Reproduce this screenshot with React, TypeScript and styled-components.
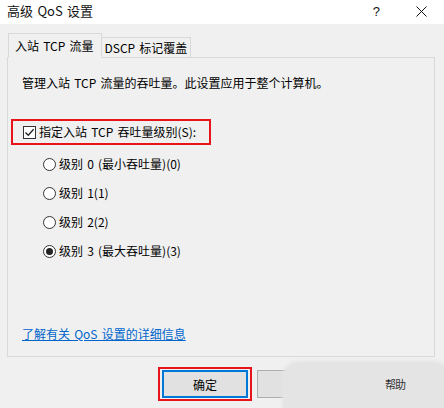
import styled, { createGlobalStyle } from 'styled-components'

const GlobalStyle = createGlobalStyle`
  html, body {
    margin: 0;
    padding: 0;
    background: #f0f0f0;
  }
  body {
    font-family: "Noto Sans CJK SC", "Noto Sans", sans-serif;
    font-size: 12px;
    word-spacing: 1.5px;
    color: #000;
  }
`

const levels = [
  { label: '级别 0 (最小吞吐量)(0)', checked: false },
  { label: '级别 1(1)', checked: false },
  { label: '级别 2(2)', checked: false },
  { label: '级别 3 (最大吞吐量)(3)', checked: true },
]

export default function App() {
  return (
    <>
      <GlobalStyle />
      <Dialog>
        <TitleBar>
          <Title>高级 QoS 设置</Title>
          <Controls>
            <HelpGlyph>?</HelpGlyph>
            <svg width="11" height="11" viewBox="0 0 11 11">
              <path d="M0.5 0.5 L10.5 10.5 M10.5 0.5 L0.5 10.5" stroke="#111" strokeWidth="1" />
            </svg>
          </Controls>
        </TitleBar>

        <Body>
          <TabList>
            <Tab $active>入站 TCP 流量</Tab>
            <Tab>DSCP 标记覆盖</Tab>
          </TabList>

          <Panel>
            <Description>管理入站 TCP 流量的吞吐量。此设置应用于整个计算机。</Description>

            <Highlight>
              <CheckRow>
                <CheckBox>
                  <svg width="11" height="11" viewBox="0 0 11 11">
                    <path d="M1.5 5.5 L4.3 8.3 L9.6 2.2" fill="none" stroke="#222" strokeWidth="1.3" />
                  </svg>
                </CheckBox>
                指定入站 TCP 吞吐量级别(S):
              </CheckRow>
            </Highlight>

            <RadioList>
              {levels.map((l) => (
                <RadioRow key={l.label}>
                  <Radio $checked={l.checked} />
                  {l.label}
                </RadioRow>
              ))}
            </RadioList>

            <Link>了解有关 QoS 设置的详细信息</Link>
          </Panel>

          <Footer>
            <ButtonFrame>
              <Button $default>确定</Button>
            </ButtonFrame>
            <Button>取消</Button>
            <Button>
              <ButtonLabel>帮助</ButtonLabel>
            </Button>
            <Smudge />
          </Footer>
        </Body>
      </Dialog>
    </>
  )
}

// ------------------ STYLING ------------------

const Dialog = styled.div`
  width: 444px;
  height: 408px;
  overflow: hidden;
  background: #f0f0f0;
  display: flex;
  flex-direction: column;
`

const TitleBar = styled.div`
  height: 24px;
  background: #fff;
  display: flex;
  align-items: center;
  justify-content: space-between;
  padding: 0 17px 0 7px;
  flex-shrink: 0;
`

const Title = styled.div`
  font-size: 13px;
  color: #111;
  line-height: 16px;
  margin-top: -2px;
`

const Controls = styled.div`
  display: flex;
  align-items: center;
  gap: 36px;
  margin-top: -2px;
`

const HelpGlyph = styled.span`
  font-family: "Liberation Sans", sans-serif;
  font-size: 13px;
  color: #111;
`

const Body = styled.div`
  position: relative;
  padding: 9px 9px 0 7px;
  display: flex;
  flex-direction: column;
`

const TabList = styled.div`
  display: flex;
  align-items: flex-end;
  height: 25px;
  padding-left: 1px;
  position: relative;
  z-index: 1;
  margin-bottom: -1px;
`

const Tab = styled.div<{ $active?: boolean }>`
  height: ${(p) => (p.$active ? '25px' : '21px')};
  box-sizing: border-box;
  padding: ${(p) => (p.$active ? '0 7px 0 6px' : '0 3px 0 3px')};
  border: 1px solid #d9d9d9;
  border-bottom: ${(p) => (p.$active ? '1px solid #f0f0f0' : '1px solid #d9d9d9')};
  border-left-width: ${(p) => (p.$active ? '1px' : '0')};
  background: #f0f0f0;
  display: flex;
  align-items: center;
  line-height: 16px;
  white-space: nowrap;
`

const Panel = styled.div`
  height: 300px;
  box-sizing: border-box;
  border: 1px solid #d9d9d9;
  background: #f0f0f0;
  padding: 17px 0 14px 14px;
  display: flex;
  flex-direction: column;
`

const Description = styled.div`
  line-height: 16px;
`

const Highlight = styled.div`
  margin: 28px 0 0 -11px;
  width: 200px;
  height: 26px;
  box-sizing: border-box;
  border: 2px solid #e8131b;
  display: flex;
  align-items: center;
  padding-left: 10px;
`

const CheckRow = styled.label`
  display: flex;
  align-items: center;
  gap: 3px;
  line-height: 16px;
`

const CheckBox = styled.span`
  width: 13px;
  height: 13px;
  box-sizing: border-box;
  border: 1px solid #333;
  background: #fff;
  display: flex;
  align-items: center;
  justify-content: center;
`

const RadioList = styled.div`
  display: flex;
  flex-direction: column;
  gap: 13px;
  margin: 11px 0 0 21px;
`

const RadioRow = styled.label`
  display: flex;
  align-items: center;
  gap: 3px;
  line-height: 16px;
`

const Radio = styled.span<{ $checked?: boolean }>`
  width: 13px;
  height: 13px;
  box-sizing: border-box;
  border-radius: 50%;
  border: 1px solid #333;
  background: #fff;
  display: flex;
  align-items: center;
  justify-content: center;

  &::after {
    content: '';
    width: 7px;
    height: 7px;
    border-radius: 50%;
    background: ${(p) => (p.$checked ? '#222' : 'transparent')};
  }
`

const Link = styled.a`
  margin-top: auto;
  color: #0066cc;
  text-decoration: underline;
  line-height: 16px;
  cursor: pointer;
`

const Footer = styled.div`
  position: relative;
  display: flex;
  align-items: center;
  gap: 9px;
  padding-left: 155px;
  margin-top: 13px;
`

const ButtonFrame = styled.div`
  margin: -3px -4px -3px -4px;
  padding: 1px 2px;
  border: 2px solid #e8131b;
  display: flex;
`

const Button = styled.div<{ $default?: boolean }>`
  width: 86px;
  height: 28px;
  box-sizing: border-box;
  border: ${(p) => (p.$default ? '2px solid #0078d7' : '1px solid #adadad')};
  background: #e1e1e1;
  display: flex;
  align-items: center;
  justify-content: center;
  flex-shrink: 0;
`

const ButtonLabel = styled.span`
  position: relative;
  z-index: 2;
  color: #333;
  font-size: 11px;
  letter-spacing: -1px;
`

const Smudge = styled.div`
  position: absolute;
  left: 275px;
  top: -9px;
  width: 168px;
  height: 60px;
  border-radius: 16px;
  background: #e4e4e4;
  filter: blur(1.5px);
  z-index: 1;
`
